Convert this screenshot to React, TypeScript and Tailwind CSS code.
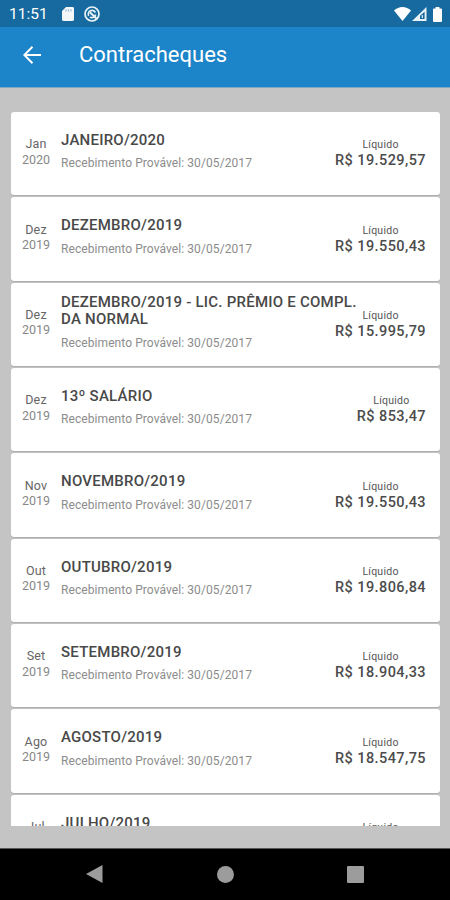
interface Paycheck {
  month: string
  year: string
  title: string
  value: string
}

const PAYCHECKS: Paycheck[] = [
  { month: 'Jan', year: '2020', title: 'JANEIRO/2020', value: 'R$ 19.529,57' },
  { month: 'Dez', year: '2019', title: 'DEZEMBRO/2019', value: 'R$ 19.550,43' },
  { month: 'Dez', year: '2019', title: 'DEZEMBRO/2019 - LIC. PRÊMIO E COMPL. DA NORMAL', value: 'R$ 15.995,79' },
  { month: 'Dez', year: '2019', title: '13º SALÁRIO', value: 'R$ 853,47' },
  { month: 'Nov', year: '2019', title: 'NOVEMBRO/2019', value: 'R$ 19.550,43' },
  { month: 'Out', year: '2019', title: 'OUTUBRO/2019', value: 'R$ 19.806,84' },
  { month: 'Set', year: '2019', title: 'SETEMBRO/2019', value: 'R$ 18.904,33' },
  { month: 'Ago', year: '2019', title: 'AGOSTO/2019', value: 'R$ 18.547,75' },
  { month: 'Jul', year: '2019', title: 'JULHO/2019', value: 'R$ 18.547,75' },
]

function StatusBar() {
  return (
    <div className="flex h-[27px] shrink-0 items-center bg-[#176a9f] pl-[9px] pr-[8px] pt-px text-white">
      <span className="w-[53px] pt-[2px] text-[15.5px] leading-none">11:51</span>
      {/* SD card */}
      <svg width="12" height="14" viewBox="0 0 12 14" fill="#f4f8fb">
        <path d="M4 0h6.6A1.4 1.4 0 0 1 12 1.400v11.200A1.400 1.400 0 0 1 10.600 14H1.400A1.400 1.400 0 0 1 0 12.600V4z" />
        <path d="M4 2.200v2.300M6.500 2.200v2.300M9 2.200v2.300" stroke="#8fb6cf" strokeWidth="1.100" />
      </svg>
      <svg className="ml-[10px]" width="16" height="16" viewBox="0 0 16 16" fill="none" stroke="#e8f2f8">
        <circle cx="8" cy="8" r="7" strokeWidth="1.700" />
        <path d="M4.700 9.800A3.700 3.700 0 0 1 11.400 6.500M11.600 8.500A3.700 3.700 0 0 1 6 11.100" strokeWidth="1.700" />
        <path d="M5.800 6.200 12.500 12.500" strokeWidth="1.900" />
      </svg>
      <div className="ml-auto flex items-center">
        <svg width="17" height="14" viewBox="0 0 17 14" fill="#fff">
          <path d="M8.500 14 0 3.500C2.500 1.200 5.300 0 8.500 0S14.500 1.200 17 3.500z" />
        </svg>
        <svg className="ml-[1px]" width="15" height="14" viewBox="0 0 15 14">
          <path d="M0 14 14.500 0v14z" fill="#e8f2f8" />
          <path d="M8 8.800 12.600 4.800V12H8z" fill="#176a9f" />
          <path d="M10.300 11V8" stroke="#e8f2f8" strokeWidth="1.200" />
        </svg>
        <svg className="ml-[6px]" width="9" height="15" viewBox="0 0 9 15" fill="#fff">
          <path d="M2.600 0h3.800v1.500H8a1 1 0 0 1 1 1V14a1 1 0 0 1-1 1H1a1 1 0 0 1-1-1V2.500a1 1 0 0 1 1-1h1.600z" />
        </svg>
      </div>
    </div>
  )
}

function Header() {
  return (
    <header className="flex h-[61px] shrink-0 items-center border-b border-[#7fa6c2] bg-[#1c84c8] pb-[5px] pl-[23px] text-white">
      <svg width="18" height="18" viewBox="0 0 18 18" fill="none" stroke="#fff" strokeWidth="2">
        <path d="M18 9H1.500M9.500 0.800 1.300 9l8.200 8.200" />
      </svg>
      <h1 className="ml-[38px] pt-px text-[22px] font-normal leading-none">Contracheques</h1>
    </header>
  )
}

function PaycheckCard({ item }: { item: Paycheck }) {
  return (
    <li className="flex h-[83.35px] shrink-0 items-center rounded-[3px] bg-white pb-[5px] pr-[14px] shadow-[0_1px_1px_rgba(0,0,0,0.12)]">
      <div className="w-[50px] shrink-0 pt-px text-center text-[12.5px] leading-[15.5px]">
        <p className="tracking-[0.2px] text-[#666]">{item.month}</p>
        <p className="text-[#888]">{item.year}</p>
      </div>
      <div className="min-w-0 flex-1">
        <p className="-mr-9 w-[310px] text-[15px] font-medium leading-[17.5px] tracking-[0.24px] text-[#484848]">{item.title}</p>
        <p className="mt-[7px] whitespace-nowrap text-[12px] leading-[14px] tracking-[0.08px] text-[#8c8c8c]">Recebimento Provável: 30/05/2017</p>
      </div>
      <div className="flex shrink-0 flex-col items-center pt-[6px]">
        <span className="text-[10.5px] leading-[14px] tracking-[0.25px] text-[#555]">Líquido</span>
        <span className="text-[14.5px] font-medium leading-[18px] tracking-[0.42px] text-[#4c4c4c]">{item.value}</span>
      </div>
    </li>
  )
}

function NavigationBar() {
  return (
    <nav className="flex h-[52px] shrink-0 items-center justify-between border-t border-[#555] bg-black px-[86px] pb-px">
      <svg width="17" height="18" viewBox="0 0 17 18" fill="#9c9c9c">
        <path d="M16.500 0v18L0 9z" />
      </svg>
      <span className="size-[17px] rounded-full bg-[#9c9c9c]" />
      <span className="size-[17px] rounded-[1px] bg-[#9c9c9c]" />
    </nav>
  )
}

export default function App() {
  return (
    <div className="flex h-[900px] w-[450px] flex-col overflow-hidden bg-[#c4c4c4] font-[Roboto,sans-serif]">
      <StatusBar />
      <Header />
      <main className="ml-[11px] mr-[10px] mb-[22px] mt-6 min-h-0 flex-1 overflow-hidden">
        <ul className="flex flex-col gap-[2px]">
          {PAYCHECKS.map((item) => (
            <PaycheckCard key={item.title} item={item} />
          ))}
        </ul>
      </main>
      <NavigationBar />
    </div>
  )
}
